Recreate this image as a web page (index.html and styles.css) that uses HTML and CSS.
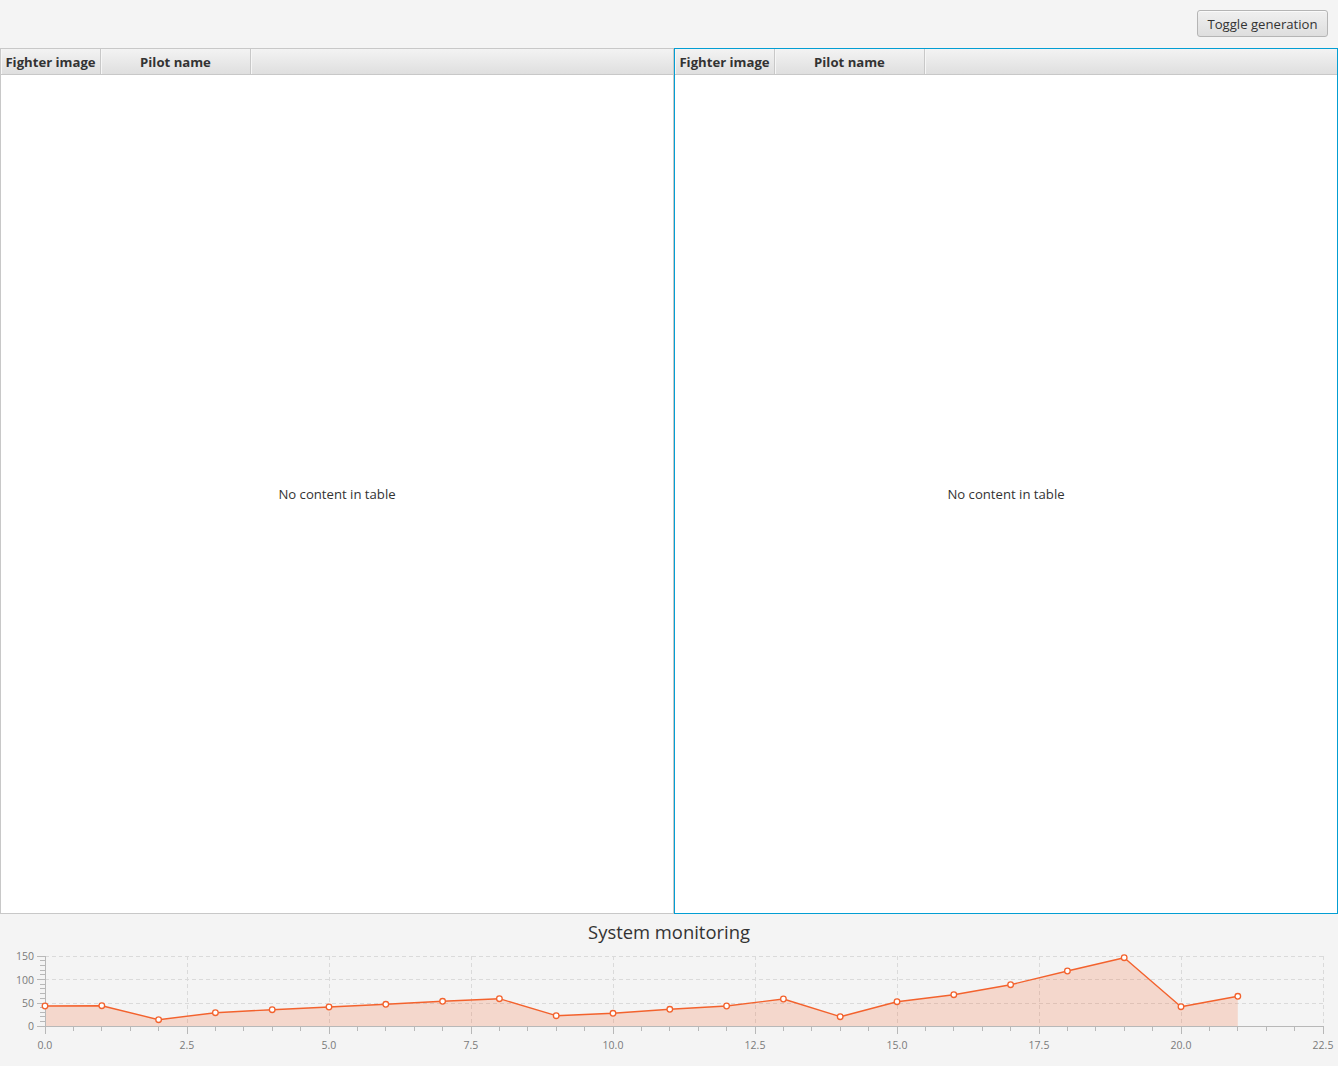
FILE: index.html
```html
<!DOCTYPE html>
<html>
<head>
<meta charset="utf-8">
<title>Fighters</title>
<link rel="stylesheet" href="styles.css">
</head>
<body>
<div class="top">
  <button class="btn">Toggle generation</button>
</div>
<div class="tables">
  <div class="table">
    <div class="thead">
      <div class="th c1">Fighter image</div>
      <div class="th c2">Pilot name</div>
      <div class="th filler"></div>
    </div>
    <div class="tbody">No content in table</div>
  </div>
  <div class="table focused">
    <div class="thead">
      <div class="th c1">Fighter image</div>
      <div class="th c2">Pilot name</div>
      <div class="th filler"></div>
    </div>
    <div class="tbody">No content in table</div>
  </div>
</div>
<div class="chart">
  <div class="chart-title">System monitoring</div>
  <svg class="plot" width="1338" height="122" viewBox="0 944 1338 122">
    <g class="grid">
      <path d="M45 956.5H1323M45 979.83H1323M45 1003.17H1323"/>
      <path d="M187.5 956V1026M329.5 956V1026M471.5 956V1026M613.5 956V1026M755.5 956V1026M897.5 956V1026M1039.5 956V1026M1181.5 956V1026M1323.5 956V1026"/>
    </g>
    <path class="area" d="M45 1026L45 1006L101.8 1005.7L158.6 1019.7L215.4 1012.7L272.2 1009.7L329 1007L385.8 1004.3L442.6 1001.3L499.4 998.7L556.2 1015.7L613 1013.3L669.8 1009.3L726.6 1006L783.4 999L840.2 1016.7L897 1001.7L953.8 994.7L1010.6 984.7L1067.4 971L1124.2 957.7L1181 1006.7L1237.8 996.3L1237.8 1026Z"/>
    <g class="axis">
      <path d="M45.5 956V1026.5M45 1026.5H1324"/>
      <path d="M45.5 1026V1034M187.5 1026V1034M329.5 1026V1034M471.5 1026V1034M613.5 1026V1034M755.5 1026V1034M897.5 1026V1034M1039.5 1026V1034M1181.5 1026V1034M1323.5 1026V1034"/>
      <path d="M73.5 1026v5M101.5 1026v5M130.5 1026v5M158.5 1026v5M215.5 1026v5M243.5 1026v5M272.5 1026v5M300.5 1026v5M357.5 1026v5M385.5 1026v5M414.5 1026v5M442.5 1026v5M499.5 1026v5M527.5 1026v5M556.5 1026v5M584.5 1026v5M641.5 1026v5M669.5 1026v5M698.5 1026v5M726.5 1026v5M783.5 1026v5M811.5 1026v5M840.5 1026v5M868.5 1026v5M925.5 1026v5M953.5 1026v5M982.5 1026v5M1010.5 1026v5M1067.5 1026v5M1095.5 1026v5M1124.5 1026v5M1152.5 1026v5M1209.5 1026v5M1237.5 1026v5M1266.5 1026v5M1294.5 1026v5"/>
      <path d="M37 1026.5H45M37 1003.17H45M37 979.83H45M37 956.5H45"/>
      <path d="M40 1021.5H45M40 1016.5H45M40 1012.5H45M40 1007.5H45M40 998.5H45M40 993.5H45M40 988.5H45M40 984.5H45M40 974.5H45M40 970.5H45M40 965.5H45M40 960.5H45"/>
    </g>
    <path class="line" d="M45 1006L101.8 1005.7L158.6 1019.7L215.4 1012.7L272.2 1009.7L329 1007L385.8 1004.3L442.6 1001.3L499.4 998.7L556.2 1015.7L613 1013.3L669.8 1009.3L726.6 1006L783.4 999L840.2 1016.7L897 1001.7L953.8 994.7L1010.6 984.7L1067.4 971L1124.2 957.7L1181 1006.7L1237.8 996.3"/>
    <g class="sym">
      <circle cx="45" cy="1006" r="2.8"/><circle cx="101.8" cy="1005.7" r="2.8"/><circle cx="158.6" cy="1019.7" r="2.8"/><circle cx="215.4" cy="1012.7" r="2.8"/><circle cx="272.2" cy="1009.7" r="2.8"/><circle cx="329" cy="1007" r="2.8"/><circle cx="385.8" cy="1004.3" r="2.8"/><circle cx="442.6" cy="1001.3" r="2.8"/><circle cx="499.4" cy="998.7" r="2.8"/><circle cx="556.2" cy="1015.7" r="2.8"/><circle cx="613" cy="1013.3" r="2.8"/><circle cx="669.8" cy="1009.3" r="2.8"/><circle cx="726.6" cy="1006" r="2.8"/><circle cx="783.4" cy="999" r="2.8"/><circle cx="840.2" cy="1016.7" r="2.8"/><circle cx="897" cy="1001.7" r="2.8"/><circle cx="953.8" cy="994.7" r="2.8"/><circle cx="1010.6" cy="984.7" r="2.8"/><circle cx="1067.4" cy="971" r="2.8"/><circle cx="1124.2" cy="957.7" r="2.8"/><circle cx="1181" cy="1006.7" r="2.8"/><circle cx="1237.8" cy="996.3" r="2.8"/>
    </g>
    <g class="ylab">
      <text x="34" y="960">150</text>
      <text x="34" y="983.5">100</text>
      <text x="34" y="1007">50</text>
      <text x="34" y="1030">0</text>
    </g>
    <g class="xlab">
      <text x="45" y="1049">0.0</text>
      <text x="187" y="1049">2.5</text>
      <text x="329" y="1049">5.0</text>
      <text x="471" y="1049">7.5</text>
      <text x="613" y="1049">10.0</text>
      <text x="755" y="1049">12.5</text>
      <text x="897" y="1049">15.0</text>
      <text x="1039" y="1049">17.5</text>
      <text x="1181" y="1049">20.0</text>
      <text x="1323" y="1049">22.5</text>
    </g>
  </svg>
</div>
</body>
</html>
```
FILE: styles.css
```css
html, body {
  margin: 0;
  padding: 0;
}
body {
  background: #f4f4f4;
  font-family: "Open Sans", "Noto Sans", sans-serif;
  font-size: 13.15px;
  color: #333;
  width: 1338px;
  height: 1066px;
  overflow: hidden;
}
.top {
  height: 48px;
  display: flex;
  justify-content: flex-end;
  align-items: flex-start;
  box-sizing: border-box;
  padding: 10px 10px 0 0;
}
.btn {
  width: 131px;
  height: 27px;
  box-sizing: border-box;
  border: 1px solid #b5b5b5;
  border-radius: 3px;
  background: linear-gradient(#f0f0f0, #dedede);
  font-family: inherit;
  font-size: 13.15px;
  color: #333;
  padding: 0;
  box-shadow: inset 0 1px 0 #fafafa;
}
.tables {
  display: grid;
  grid-template-columns: 674px 1fr;
  height: 866px;
}
.table {
  display: flex;
  flex-direction: column;
  border: 1px solid #c8c8c8;
  background: #fff;
  min-width: 0;
}
.table.focused {
  border-color: #039ed3;
}
.thead {
  display: flex;
  height: 26px;
  box-sizing: border-box;
  border-bottom: 1px solid #c8c8c8;
  background: linear-gradient(#f3f3f3, #dfdfdf);
  flex: none;
}
.th {
  box-sizing: border-box;
  border-right: 1px solid #c8c8c8;
  display: flex;
  align-items: center;
  justify-content: center;
  font-weight: bold;
  font-size: 13.15px;
  color: #333;
  white-space: nowrap;
  box-shadow: inset 1px 0 0 #f6f6f6;
}
.th.c1 { width: 100px; }
.th.c2 { width: 150px; }
.th.filler { flex: 1; border-right: none; }
.tbody {
  flex: 1;
  display: flex;
  align-items: center;
  justify-content: center;
  font-size: 13.15px;
  color: #333;
}
.chart {
  height: 152px;
  display: flex;
  flex-direction: column;
}
.chart-title {
  padding-top: 6px;
  height: 24px;
  line-height: 24px;
  text-align: center;
  font-size: 18.4px;
  color: #333;
}
.plot {
  display: block;
}
.grid path {
  fill: none;
  stroke: #dadada;
  stroke-width: 1;
  stroke-dasharray: 4 3;
  shape-rendering: crispEdges;
}
.area {
  fill: #f3622d;
  fill-opacity: 0.2;
  stroke: none;
}
.axis path {
  fill: none;
  stroke: #b8b8b8;
  stroke-width: 1;
  shape-rendering: crispEdges;
}
.line {
  fill: none;
  stroke: #f3622d;
  stroke-width: 1.4;
  stroke-linejoin: round;
}
.sym circle {
  fill: #fff;
  stroke: #f3622d;
  stroke-width: 1.3;
}
.ylab text, .xlab text {
  font-family: "Open Sans", "Noto Sans", sans-serif;
  font-size: 10.5px;
  fill: #7a7a7a;
}
.ylab text { text-anchor: end; }
.xlab text { text-anchor: middle; }
```
